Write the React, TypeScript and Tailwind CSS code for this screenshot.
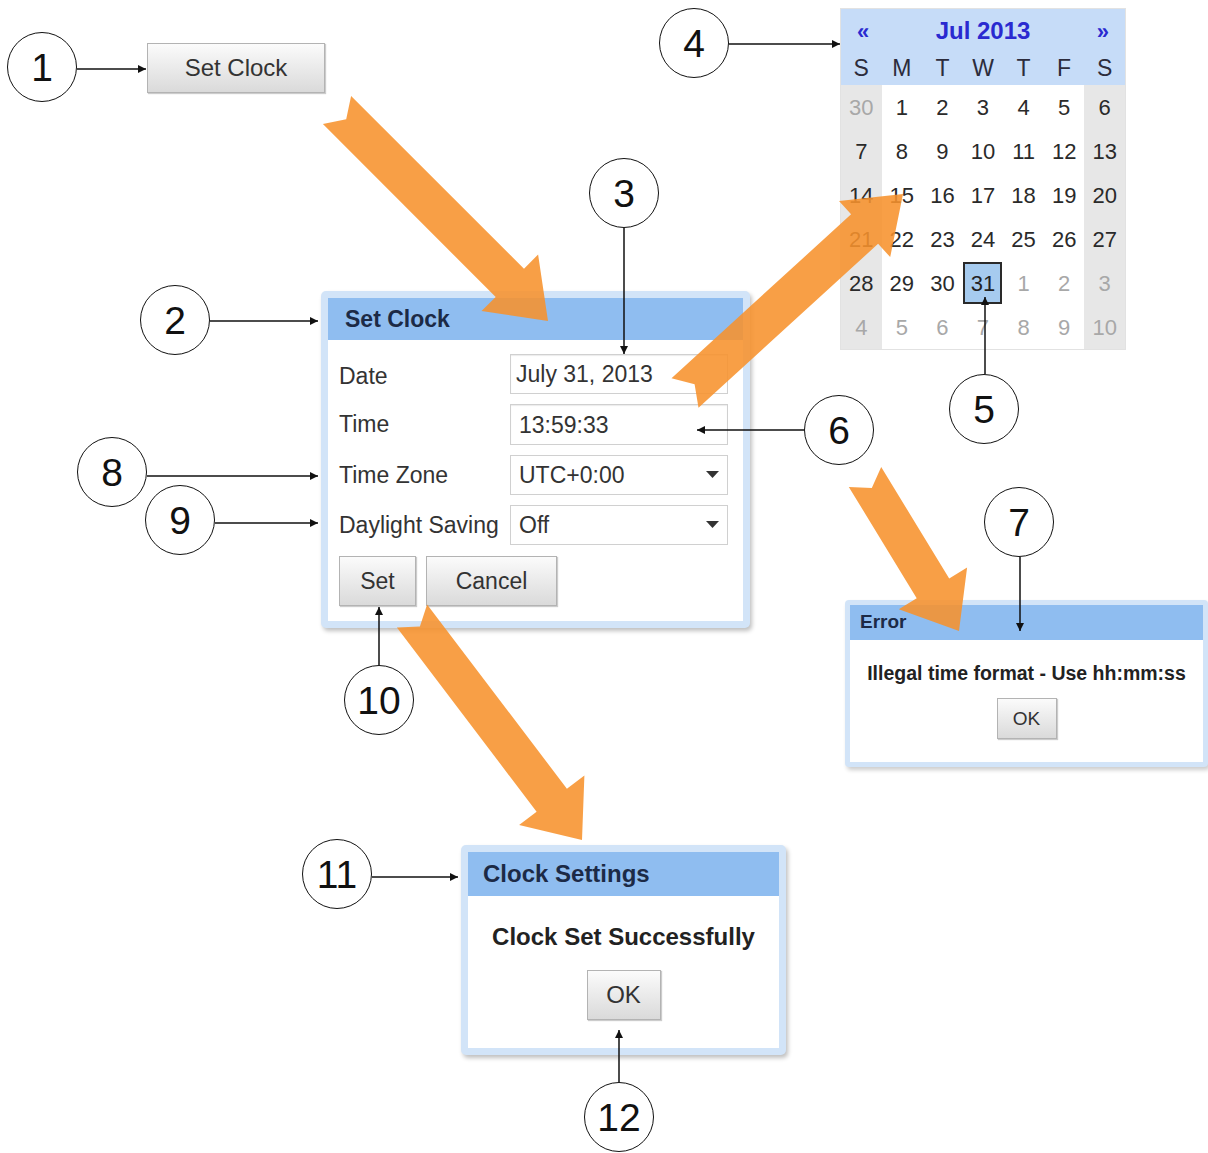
type Pt = [number, number];

const callouts = [
  { n: "1", pos: "left-[7px] top-[32px]" },
  { n: "2", pos: "left-[140px] top-[285px]" },
  { n: "3", pos: "left-[589px] top-[158px]" },
  { n: "4", pos: "left-[659px] top-[8px]" },
  { n: "5", pos: "left-[949px] top-[374px]" },
  { n: "6", pos: "left-[804px] top-[395px]" },
  { n: "7", pos: "left-[984px] top-[487px]" },
  { n: "8", pos: "left-[77px] top-[437px]" },
  { n: "9", pos: "left-[145px] top-[485px]" },
  { n: "10", pos: "left-[344px] top-[665px]" },
  { n: "11", pos: "left-[302px] top-[839px]" },
  { n: "12", pos: "left-[584px] top-[1082px]" },
];

// thin black pointer lines: x1, y1, x2, y2 (arrowhead at the end)
const pointers: [number, number, number, number][] = [
  [77, 69, 146, 69],
  [210, 321, 318, 321],
  [624, 228, 624, 354],
  [729, 44, 840, 44],
  [985, 374, 985, 297],
  [804, 430, 697, 430],
  [1020, 557, 1020, 631],
  [147, 476, 318, 476],
  [215, 523, 318, 523],
  [379, 665, 379, 607],
  [372, 877, 458, 877],
  [619, 1082, 619, 1030],
];

// big orange flow arrows
const flows: { tail: Pt; tip: Pt; w: number; hw: number; hl: number }[] = [
  { tail: [337, 110], tip: [548, 321], w: 40, hw: 80, hl: 54 },
  { tail: [685, 393], tip: [903, 194], w: 40, hw: 76, hl: 52 },
  { tail: [865, 477], tip: [959, 631], w: 38, hw: 80, hl: 50 },
  { tail: [412, 616], tip: [582, 840], w: 38, hw: 82, hl: 50 },
];

function arrowPoints(tail: Pt, tip: Pt, w: number, hw: number, hl: number) {
  const dx = tip[0] - tail[0];
  const dy = tip[1] - tail[1];
  const len = Math.hypot(dx, dy);
  const ux = dx / len;
  const uy = dy / len;
  const nx = -uy;
  const ny = ux;
  const bx = tip[0] - ux * hl;
  const by = tip[1] - uy * hl;
  const p = (x: number, y: number) => `${x.toFixed(1)},${y.toFixed(1)}`;
  return [
    p(tail[0] + (nx * w) / 2, tail[1] + (ny * w) / 2),
    p(bx + (nx * w) / 2, by + (ny * w) / 2),
    p(bx + (nx * hw) / 2, by + (ny * hw) / 2),
    p(tip[0], tip[1]),
    p(bx - (nx * hw) / 2, by - (ny * hw) / 2),
    p(bx - (nx * w) / 2, by - (ny * w) / 2),
    p(tail[0] - (nx * w) / 2, tail[1] - (ny * w) / 2),
    p(tail[0] + ux * 13, tail[1] + uy * 13),
  ].join(" ");
}

const weeks: { d: number; other?: boolean; sel?: boolean }[][] = [
  [{ d: 30, other: true }, { d: 1 }, { d: 2 }, { d: 3 }, { d: 4 }, { d: 5 }, { d: 6 }],
  [{ d: 7 }, { d: 8 }, { d: 9 }, { d: 10 }, { d: 11 }, { d: 12 }, { d: 13 }],
  [{ d: 14 }, { d: 15 }, { d: 16 }, { d: 17 }, { d: 18 }, { d: 19 }, { d: 20 }],
  [{ d: 21 }, { d: 22 }, { d: 23 }, { d: 24 }, { d: 25 }, { d: 26 }, { d: 27 }],
  [
    { d: 28 },
    { d: 29 },
    { d: 30 },
    { d: 31, sel: true },
    { d: 1, other: true },
    { d: 2, other: true },
    { d: 3, other: true },
  ],
  [
    { d: 4, other: true },
    { d: 5, other: true },
    { d: 6, other: true },
    { d: 7, other: true },
    { d: 8, other: true },
    { d: 9, other: true },
    { d: 10, other: true },
  ],
];

const btn =
  "flex items-center justify-center border border-[#b3b3b3] bg-linear-to-b from-[#fbfbfb] to-[#dadada] text-[#333] shadow-[1px_1px_1px_rgba(0,0,0,0.2)]";

function Caret() {
  return (
    <svg width="13" height="8" viewBox="0 0 13 8" className="mr-[8px]">
      <path d="M0 0 H13 L6.5 7 Z" fill="#333" />
    </svg>
  );
}

export default function App() {
  return (
    <div className="relative w-[1208px] h-[1153px] overflow-hidden bg-white font-['Liberation_Sans',Arial,sans-serif] text-[#333]">
      {/* launcher button */}
      <button className={`absolute left-[147px] top-[43px] w-[178px] h-[50px] text-[24px] ${btn}`}>
        Set Clock
      </button>

      {/* Set Clock dialog */}
      <div className="absolute left-[321px] top-[291px] w-[429px] h-[337px] p-[7px] rounded-[5px] bg-[#d2e4f8] shadow-[2px_3px_4px_rgba(0,0,0,0.25)] flex flex-col">
        <div className="h-[42px] shrink-0 bg-[#8fbdf0] pl-[17px] flex items-center text-[23px] font-bold text-[#1c2a46]">
          Set Clock
        </div>
        <div className="flex-1 bg-white pt-[14px] pl-[11px] pr-[14px] flex flex-col">
          <div className="grid grid-cols-[171px_218px] gap-y-[10px] text-[23px] items-center">
            <span className="pt-[4px]">Date</span>
            <div className="h-[40px] border border-[#d0d0d0] shadow-[inset_0_1px_1px_rgba(0,0,0,0.08)] flex items-center pl-[5px]">
              July 31, 2013
            </div>
            <span>Time</span>
            <div className="h-[41px] border border-[#d0d0d0] shadow-[inset_0_1px_1px_rgba(0,0,0,0.08)] flex items-center pl-[8px] pt-[2px]">
              13:59:33
            </div>
            <span>Time Zone</span>
            <div className="h-[40px] border border-[#d0d0d0] flex items-center justify-between pl-[8px]">
              UTC+0:00
              <Caret />
            </div>
            <span className="whitespace-nowrap">Daylight Saving</span>
            <div className="h-[40px] border border-[#d0d0d0] flex items-center justify-between pl-[8px]">
              Off
              <Caret />
            </div>
          </div>
          <div className="mt-[11px] flex gap-[10px] text-[23px]">
            <button className={`w-[77px] h-[50px] ${btn}`}>Set</button>
            <button className={`w-[131px] h-[50px] ${btn}`}>Cancel</button>
          </div>
        </div>
      </div>

      {/* calendar */}
      <div className="absolute left-[840px] top-[8px] w-[286px] border border-[#e2e2e2]">
        <div className="bg-[#c6dcf8]">
          <div className="h-[42px] flex items-center justify-between px-[16px] pt-[2px] font-bold text-[#2a2ad0]">
            <span className="text-[22px]">«</span>
            <span className="text-[24px]">Jul 2013</span>
            <span className="text-[22px]">»</span>
          </div>
          <div className="h-[34px] grid grid-cols-7 text-[23px] text-[#2c2c3c]">
            {["S", "M", "T", "W", "T", "F", "S"].map((d, i) => (
              <span key={i} className="flex items-center justify-center">
                {d}
              </span>
            ))}
          </div>
        </div>
        <div className="grid grid-cols-7 text-[22px]">
          {weeks.flat().map((c, i) => {
            const edge = i % 7 === 0 || i % 7 === 6;
            return (
              <div
                key={i}
                className={`h-[44px] flex items-center justify-center ${edge ? "bg-[#e7e7e7]" : "bg-white"}`}
              >
                {c.sel ? (
                  <span className="w-[39px] h-[42px] border-2 border-[#2a2a2a] bg-[#a6cbef] flex items-center justify-center text-[#222]">
                    {c.d}
                  </span>
                ) : (
                  <span className={c.other ? "text-[#a8a8a8]" : "text-[#2a2a2a]"}>{c.d}</span>
                )}
              </div>
            );
          })}
        </div>
      </div>

      {/* Error dialog */}
      <div className="absolute left-[845px] top-[600px] w-[363px] h-[167px] p-[5px] rounded-[4px] bg-[#d2e4f8] shadow-[2px_3px_4px_rgba(0,0,0,0.2)] flex flex-col">
        <div className="h-[35px] shrink-0 bg-[#8fbdf0] pl-[10px] flex items-center text-[19px] font-bold text-[#1c2a46]">
          Error
        </div>
        <div className="flex-1 bg-white flex flex-col items-center pt-[19px]">
          <span className="text-[19.5px] font-bold text-[#222] whitespace-nowrap">
            Illegal time format - Use hh:mm:ss
          </span>
          <button className={`mt-[10px] w-[60px] h-[41px] text-[19px] ${btn}`}>OK</button>
        </div>
      </div>

      {/* Clock Settings dialog */}
      <div className="absolute left-[461px] top-[845px] w-[325px] h-[210px] p-[7px] rounded-[5px] bg-[#d2e4f8] shadow-[2px_3px_4px_rgba(0,0,0,0.25)] flex flex-col">
        <div className="h-[44px] shrink-0 bg-[#8fbdf0] pl-[15px] flex items-center text-[24px] font-bold text-[#1c2a46]">
          Clock Settings
        </div>
        <div className="flex-1 bg-white flex flex-col items-center pt-[23px]">
          <span className="text-[24px] font-bold text-[#222]">Clock Set Successfully</span>
          <button className={`mt-[15px] w-[74px] h-[50px] text-[24px] ${btn}`}>OK</button>
        </div>
      </div>

      {/* pointer lines */}
      <svg className="absolute inset-0 pointer-events-none" width="1208" height="1153">
        <defs>
          <marker
            id="ah"
            viewBox="0 0 10 10"
            refX="10"
            refY="5"
            markerWidth="11"
            markerHeight="8"
            markerUnits="userSpaceOnUse"
            orient="auto"
          >
            <path d="M0 0 L10 5 L0 10 Z" fill="#111" />
          </marker>
        </defs>
        {pointers.map(([x1, y1, x2, y2], i) => (
          <line key={i} x1={x1} y1={y1} x2={x2} y2={y2} stroke="#111" strokeWidth="1.5" markerEnd="url(#ah)" />
        ))}
      </svg>

      {callouts.map((c) => (
        <div
          key={c.n}
          className={`absolute ${c.pos} w-[70px] h-[70px] rounded-full border-[1.5px] border-[#111] bg-white flex items-center justify-center text-[39px] leading-none text-[#111]`}
        >
          {c.n}
        </div>
      ))}

      {/* orange flow arrows */}
      <svg className="absolute inset-0 pointer-events-none" width="1208" height="1153">
        {flows.map((f, i) => (
          <polygon key={i} points={arrowPoints(f.tail, f.tip, f.w, f.hw, f.hl)} fill="#f7922c" fillOpacity="0.88" />
        ))}
      </svg>
    </div>
  );
}
